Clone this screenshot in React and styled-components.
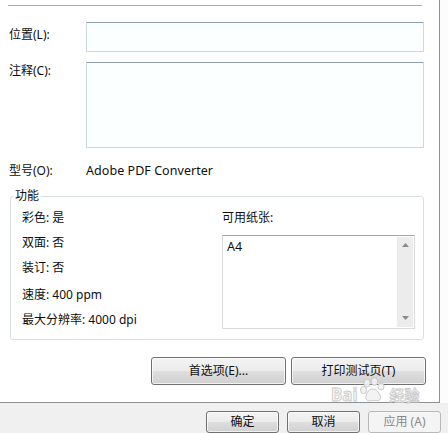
import React from "react";
import styled, { createGlobalStyle } from "styled-components";

const Global = createGlobalStyle`
  html, body { margin: 0; padding: 0; background: #ffffff; }
  body {
    font-family: "Noto Sans", "Noto Sans CJK SC", sans-serif;
    font-size: 12px;
    color: #0e0e0e;
  }
`;

const Page = styled.div`
  position: relative;
  width: 448px;
  height: 433px;
  overflow: hidden;
  display: grid;
  grid-template-columns: 440px 8px;
  grid-template-rows: 403px 30px;
  background: #fcfcfc;
`;

const Panel = styled.div`
  box-sizing: border-box;
  background: #ffffff;
  border-right: 1px solid #8f9294;
  border-bottom: 1px solid #8f9294;
  display: flex;
  flex-direction: column;
`;

const Separator = styled.div`
  margin: 5px 0 0 8px;
  width: 414px;
  height: 1px;
  background: #a9a9a9;
`;

const FieldRow = styled.div`
  display: grid;
  grid-template-columns: 86px 338px;
  margin-top: ${(p) => p.$top}px;
`;

const Label = styled.div`
  padding-left: 9px;
  padding-top: ${(p) => p.$pad || 0}px;
  line-height: 16px;
  white-space: nowrap;
`;

const TextBox = styled.div`
  box-sizing: border-box;
  height: ${(p) => p.$h}px;
  background: #fcffff;
  border: 1px solid #cbd9df;
  border-top-color: #8fa2ab;
  border-radius: 1px;
`;

const ModelValue = styled.div`
  line-height: 16px;
  font-size: 12.5px;
  letter-spacing: 0.05px;
`;

const GroupBox = styled.div`
  box-sizing: border-box;
  margin: 17px 0 0 10px;
  width: 414px;
  height: 144px;
  border: 1px solid #d9dee1;
  border-radius: 3px;
  display: flex;
  flex-direction: column;
`;

const GroupTitle = styled.div`
  margin: -9px 0 0 2px;
  padding: 0 2px;
  width: fit-content;
  background: #ffffff;
  line-height: 16px;
`;

const GroupBody = styled.div`
  display: grid;
  grid-template-columns: 200px 193px;
  padding-left: 11px;
  margin-top: 1px;
`;

const Column = styled.div`
  display: flex;
  flex-direction: column;
`;

const InfoRow = styled.div`
  height: 25px;
  line-height: 25px;
  white-space: nowrap;
  margin-top: ${(p) => (p.$spaced ? 2 : 0)}px;
`;

const ListBox = styled.div`
  box-sizing: border-box;
  margin-top: 5px;
  height: 94px;
  border: 1px solid #dadada;
  border-top-color: #a3a3a3;
  display: grid;
  grid-template-columns: 1fr 17px;
  background: #ffffff;
`;

const ListItems = styled.div`
  padding: 3px 0 0 4px;
  line-height: 16px;
  font-size: 12.5px;
`;

const ScrollBar = styled.div`
  margin: 1px 1px 1px 0;
  background: #ececec;
  display: flex;
  flex-direction: column;
  justify-content: space-between;
  align-items: center;
  padding: 6px 0 7px;
`;

const ButtonRow = styled.div`
  display: flex;
  justify-content: flex-end;
  gap: 5px;
  margin-top: 17px;
  padding-right: 13px;
`;

const Button = styled.button`
  box-sizing: border-box;
  width: ${(p) => p.$w}px;
  height: ${(p) => p.$h}px;
  padding: 0;
  font-family: "Noto Sans", "Noto Sans CJK SC", sans-serif;
  font-size: 12px;
  color: ${(p) => (p.disabled ? "#8a8a8a" : "#0e0e0e")};
  border: 1px solid ${(p) => (p.disabled ? "#b5b9bb" : "#707070")};
  border-radius: 3px;
  background: ${(p) =>
    p.disabled
      ? "#f4f4f4"
      : "linear-gradient(#f3f3f3 0%, #ececec 48%, #dedede 52%, #d0d0d0 100%)"};
  box-shadow: inset 0 0 0 1px ${(p) => (p.disabled ? "#f4f4f4" : "rgba(255,255,255,0.7)")};
  line-height: 16px;
`;

const BottomBar = styled.div`
  grid-column: 1 / span 2;
  background: #f0f0f0;
  display: flex;
  justify-content: flex-end;
  gap: 8px;
  padding: 8px 7px 0 0;
  box-sizing: border-box;
`;

const Watermark = styled.div`
  position: absolute;
  left: 331px;
  top: 377px;
  display: flex;
  align-items: flex-end;
  gap: 2px;
  opacity: 0.9;
  pointer-events: none;
`;

const MarkText = styled.span`
  font-family: "Noto Sans", "Noto Sans CJK SC", sans-serif;
  font-size: ${(p) => p.$size}px;
  font-weight: 700;
  color: #f4f4f4;
  line-height: 1;
  -webkit-text-stroke: 0.8px #c4c4c4;
`;

const Arrow = ({ up }) => (
  <svg width="7" height="4" viewBox="0 0 7 4">
    <path d={up ? "M0 4 L3.5 0 L7 4 Z" : "M0 0 L3.5 4 L7 0 Z"} fill="#8a8a8a" />
  </svg>
);

const Paw = () => (
  <svg width="28" height="26" viewBox="0 0 28 26">
    <g fill="#f2f2f2" stroke="#c4c4c4" strokeWidth="1">
      <ellipse cx="7" cy="6" rx="3.2" ry="4" />
      <ellipse cx="14.5" cy="4.5" rx="3.2" ry="4" />
      <ellipse cx="3.5" cy="13" rx="3" ry="3.6" />
      <ellipse cx="21" cy="9.5" rx="3" ry="3.6" />
      <path d="M13 12 C8 12 5 18 6 21.5 C7 24.5 11 24 13 23.5 C15 23 18 24.5 20 22.5 C22 20 18 12 13 12 Z" />
    </g>
  </svg>
);

export default function App() {
  return (
    <>
      <Global />
      <Page>
        <Panel>
          <Separator />
          <FieldRow $top={16}>
            <Label $pad={5}>位置(L):</Label>
            <TextBox $h={30} />
          </FieldRow>
          <FieldRow $top={10}>
            <Label $pad={1}>注释(C):</Label>
            <TextBox $h={86} />
          </FieldRow>
          <FieldRow $top={15}>
            <Label>型号(O):</Label>
            <ModelValue>Adobe PDF Converter</ModelValue>
          </FieldRow>
          <GroupBox>
            <GroupTitle>功能</GroupTitle>
            <GroupBody>
              <Column>
                <InfoRow>彩色: 是</InfoRow>
                <InfoRow>双面: 否</InfoRow>
                <InfoRow>装订: 否</InfoRow>
                <InfoRow $spaced>速度: 400 ppm</InfoRow>
                <InfoRow>最大分辨率: 4000 dpi</InfoRow>
              </Column>
              <Column>
                <InfoRow>可用纸张:</InfoRow>
                <ListBox>
                  <ListItems>A4</ListItems>
                  <ScrollBar>
                    <Arrow up />
                    <Arrow />
                  </ScrollBar>
                </ListBox>
              </Column>
            </GroupBody>
          </GroupBox>
          <ButtonRow>
            <Button $w={135} $h={28}>首选项(E)...</Button>
            <Button $w={135} $h={28}>打印测试页(T)</Button>
          </ButtonRow>
        </Panel>
        <div />
        <BottomBar>
          <Button $w={73} $h={22}>确定</Button>
          <Button $w={73} $h={22}>取消</Button>
          <Button $w={73} $h={22} disabled>应用 (A)</Button>
        </BottomBar>
        <Watermark>
          <MarkText $size={17}>Bai</MarkText>
          <Paw />
          <MarkText $size={15}>经验</MarkText>
        </Watermark>
      </Page>
    </>
  );
}
